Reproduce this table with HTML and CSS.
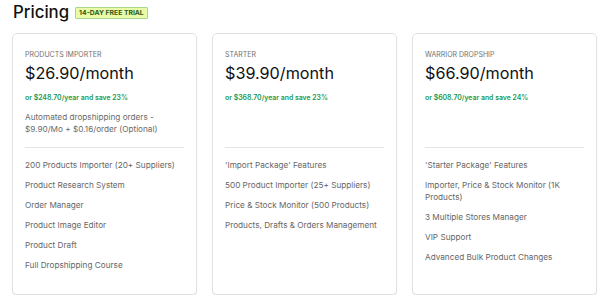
FILE: index.html
```html
<!DOCTYPE html>
<html>
<head>
<meta charset="utf-8">
<link rel="stylesheet" href="styles.css">
</head>
<body>
<div class="page">
  <div class="header">
    <h1 class="title">Pricing</h1>
    <span class="badge">14-DAY FREE TRIAL</span>
  </div>
  <div class="plans">
    <div class="card">
      <div class="card-top">
        <div class="plan-name">PRODUCTS IMPORTER</div>
        <div class="price">$26.90/month</div>
        <div class="save">or $248.70/year and save 23%</div>
        <div class="desc">Automated dropshipping orders - $9.90/Mo + $0.16/order (Optional)</div>
      </div>
      <ul class="features">
        <li>200 Products Importer (20+ Suppliers)</li>
        <li>Product Research System</li>
        <li>Order Manager</li>
        <li>Product Image Editor</li>
        <li>Product Draft</li>
        <li>Full Dropshipping Course</li>
      </ul>
    </div>
    <div class="card">
      <div class="card-top">
        <div class="plan-name">STARTER</div>
        <div class="price">$39.90/month</div>
        <div class="save">or $368.70/year and save 23%</div>
      </div>
      <ul class="features">
        <li>'Import Package' Features</li>
        <li>500 Product Importer (25+ Suppliers)</li>
        <li>Price &amp; Stock Monitor (500 Products)</li>
        <li>Products, Drafts &amp; Orders Management</li>
      </ul>
    </div>
    <div class="card">
      <div class="card-top">
        <div class="plan-name">WARRIOR DROPSHIP</div>
        <div class="price">$66.90/month</div>
        <div class="save">or $608.70/year and save 24%</div>
      </div>
      <ul class="features">
        <li>'Starter Package' Features</li>
        <li>Importer, Price &amp; Stock Monitor (1K Products)</li>
        <li>3 Multiple Stores Manager</li>
        <li>VIP Support</li>
        <li>Advanced Bulk Product Changes</li>
      </ul>
    </div>
  </div>
</div>
</body>
</html>
```
FILE: styles.css
```css
* { box-sizing: border-box; }
html, body { margin: 0; padding: 0; background: #fff; }
body { font-family: Inter, "Noto Sans", sans-serif; color: #111; }
.page { padding: 1px 3px 0 12px; }
.header { display: flex; align-items: center; gap: 6px; height: 22px; margin-bottom: 10px; }
.title { margin: 0; font-size: 16.8px; font-weight: 500; line-height: 22px; color: #111; padding-left: 1px; }
.badge {
  font-size: 6.8px; font-weight: 700; color: #2f5a16;
  background: #e9fba8; border: 1px solid #a8d98a;
  padding: 1px 3px; line-height: 8px; border-radius: 1px; margin-top: 1px;
}
.plans { display: grid; grid-template-columns: repeat(3, 185px); gap: 15px; }
.card {
  border: 1px solid #e2e2e2; border-radius: 5px; height: 262px;
  padding: 13px 12px 0 12px;
  box-shadow: 0 1px 1px rgba(0,0,0,0.12);
}
.card-top { height: 101px; border-bottom: 1px solid #e4e4e4; }
.plan-name { font-size: 7px; color: #707070; line-height: 12px; padding-top: 2px; }
.price { font-size: 16.2px; color: #111; line-height: 22px; margin-top: 1px; }
.save { font-size: 6.9px; color: #23984a; font-weight: 600; line-height: 12px; margin-top: 8px; }
.desc { font-size: 8.2px; color: #6a6a6a; line-height: 11.5px; margin-top: 8px; }
.features { list-style: none; margin: 0; padding: 11px 0 0 0; }
.features li { font-size: 8.2px; color: #666; line-height: 12px; margin-bottom: 8px; }
```
